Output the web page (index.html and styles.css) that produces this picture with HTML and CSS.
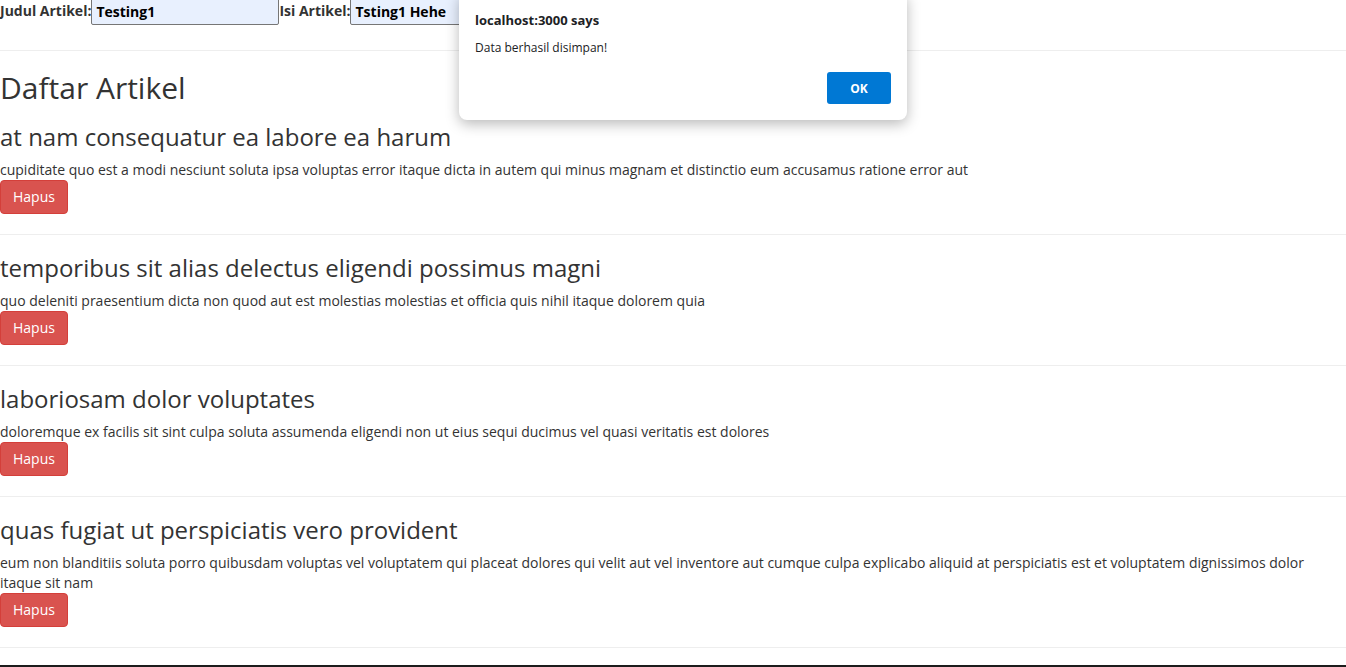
FILE: index.html
```html
<!DOCTYPE html>
<html>
<head>
<meta charset="utf-8">
<link rel="stylesheet" href="styles.css">
</head>
<body>
<form class="entry-form">
  <label class="field-label">Judul Artikel:</label><input class="field-input" type="text" value="Testing1">
  <label class="field-label">Isi Artikel:</label><input class="field-input" type="text" value="Tsting1 Hehe">
</form>
<hr class="divider">
<main class="article-list">
  <h2 class="list-title">Daftar Artikel</h2>
  <article class="article">
    <h3 class="article-title">at nam consequatur ea labore ea harum</h3>
    <p class="article-body">cupiditate quo est a modi nesciunt soluta ipsa voluptas error itaque dicta in autem qui minus magnam et distinctio eum accusamus ratione error aut</p>
    <button class="btn-danger" type="button">Hapus</button>
    <hr class="divider">
  </article>
  <article class="article">
    <h3 class="article-title">temporibus sit alias delectus eligendi possimus magni</h3>
    <p class="article-body">quo deleniti praesentium dicta non quod aut est molestias molestias et officia quis nihil itaque dolorem quia</p>
    <button class="btn-danger" type="button">Hapus</button>
    <hr class="divider">
  </article>
  <article class="article">
    <h3 class="article-title">laboriosam dolor voluptates</h3>
    <p class="article-body">doloremque ex facilis sit sint culpa soluta assumenda eligendi non ut eius sequi ducimus vel quasi veritatis est dolores</p>
    <button class="btn-danger" type="button">Hapus</button>
    <hr class="divider">
  </article>
  <article class="article">
    <h3 class="article-title">quas fugiat ut perspiciatis vero provident</h3>
    <p class="article-body">eum non blanditiis soluta porro quibusdam voluptas vel voluptatem qui placeat dolores qui velit aut vel inventore aut cumque culpa explicabo aliquid at perspiciatis est et voluptatem dignissimos dolor itaque sit nam</p>
    <button class="btn-danger" type="button">Hapus</button>
    <hr class="divider">
  </article>
</main>
<div class="bottom-edge"></div>

<div class="alert-dialog">
  <div class="alert-origin">localhost:3000 says</div>
  <div class="alert-message">Data berhasil disimpan!</div>
  <div class="alert-actions"><button class="alert-ok" type="button">OK</button></div>
</div>
</body>
</html>
```

FILE: styles.css
```css
html, body {
  margin: 0;
  padding: 0;
  background: #fff;
}
body {
  font-family: "Open Sans", "Noto Sans", sans-serif;
  font-size: 14px;
  line-height: 20px;
  color: #333;
  height: 667px;
  overflow: hidden;
  position: relative;
}
.entry-form {
  display: flex;
  align-items: flex-start;
  height: 34px;
  margin-top: -4px;
}
.field-label {
  font-weight: bold;
  font-size: 14px;
  line-height: 20px;
  margin-top: 5px;
  color: #333;
}
.field-input {
  box-sizing: border-box;
  width: 188px;
  height: 28px;
  margin: 1px 0 0;
  padding: 0 4px 0;
  border: 1px solid #767676;
  border-radius: 0 0 2px 2px;
  background: #e8f0fe;
  font-family: "Open Sans", "Noto Sans", sans-serif;
  font-size: 14px;
  font-weight: bold;
  color: #000;
}
.divider {
  border: 0;
  border-top: 1px solid #eee;
  margin: 20px 0;
  height: 0;
}
.list-title {
  font-size: 30px;
  font-weight: 400;
  line-height: 33px;
  margin: 20px 0 10px;
}
.article-title {
  font-size: 24px;
  font-weight: 400;
  line-height: 26px;
  margin: 20px 0 10px;
}
.article-body {
  margin: 0;
}
.btn-danger {
  display: block;
  box-sizing: border-box;
  height: 34px;
  padding: 6px 12px;
  font-family: "Open Sans", "Noto Sans", sans-serif;
  font-size: 14px;
  line-height: 20px;
  color: #fff;
  background: #d9534f;
  border: 1px solid #d43f3a;
  border-radius: 4px;
}
.bottom-edge {
  position: absolute;
  left: 0;
  right: 0;
  bottom: 0;
  height: 2px;
  background: #1c1c1c;
}
.alert-dialog {
  position: absolute;
  top: -8px;
  left: 459px;
  width: 448px;
  height: 128px;
  box-sizing: border-box;
  padding: 20px 16px 0;
  background: #fff;
  border-radius: 8px;
  box-shadow: 0 4px 14px rgba(0,0,0,0.28);
  font-family: "Open Sans", "Noto Sans", sans-serif;
  color: #202124;
}
.alert-origin {
  font-size: 13px;
  font-weight: bold;
  line-height: 16px;
  margin-top: 0;
}
.alert-message {
  font-size: 12px;
  line-height: 16px;
  margin-top: 12px;
}
.alert-actions {
  display: flex;
  justify-content: flex-end;
  margin-top: 16px;
}
.alert-ok {
  width: 64px;
  height: 32px;
  border: 0;
  border-radius: 3px;
  background: #0078d4;
  color: #fff;
  font-family: "Open Sans", "Noto Sans", sans-serif;
  font-weight: bold;
  font-size: 12px;
}
```
